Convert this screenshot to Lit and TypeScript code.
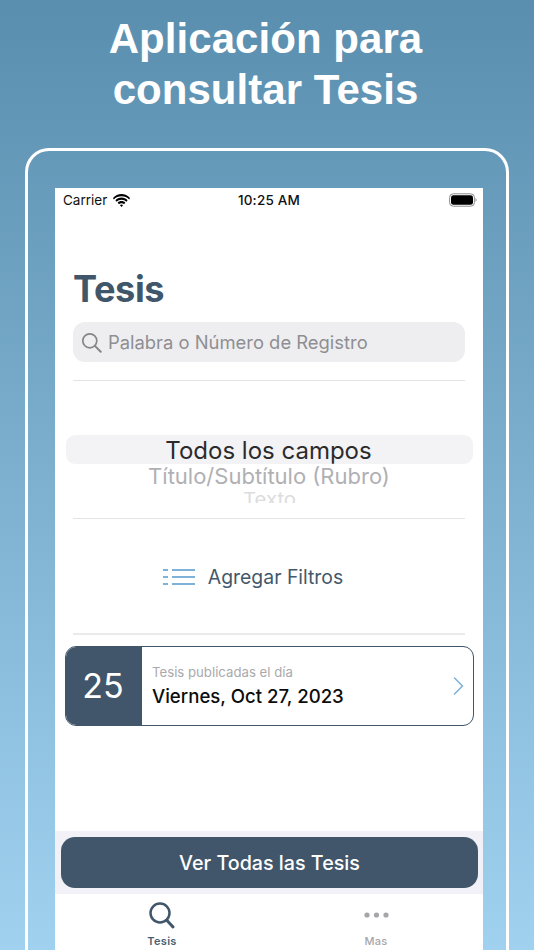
import { LitElement, html, css } from "lit";
import { customElement } from "lit/decorators.js";

@customElement("app-root")
export class AppRoot extends LitElement {
  static styles = css`
    :host {
      display: flex;
      flex-direction: column;
      width: 534px;
      height: 950px;
      overflow: hidden;
      background: linear-gradient(180deg, #5a8eae 0%, #a0d2f0 100%);
      font-family: Inter, "Liberation Sans", sans-serif;
    }
    h1 {
      margin: 0;
      padding: 13px 3px 0 0;
      height: 135px;
      box-sizing: border-box;
      text-align: center;
      font: bold 42px/51px "Liberation Sans", Arial, sans-serif;
      letter-spacing: 0.05px;
      color: #fff;
    }
    .frame {
      flex: 1;
      min-height: 0;
      margin: 13px 25px 0 25px;
      border: 3px solid #fff;
      border-bottom: 0;
      border-radius: 24px 24px 0 0;
      padding: 37px 23px 0 27px;
      display: flex;
    }
    .screen {
      flex: 1;
      background: #fff;
      display: flex;
      flex-direction: column;
      min-width: 0;
    }
    .status {
      height: 24px;
      display: grid;
      grid-template-columns: 1fr auto 1fr;
      align-items: center;
      padding: 0 6px 0 8px;
      font-size: 13.5px;
      color: #111;
    }
    .status .left { display: flex; align-items: center; gap: 6px; }
    .status .time { font-weight: 500; letter-spacing: 0.2px; padding-right: 2px; }
    .status .right { display: flex; justify-content: flex-end; }
    .content { padding: 0 18px; }
    .title {
      margin: 55px 0 0;
      font-size: 36.2px;
      line-height: 44px;
      font-weight: 700;
      letter-spacing: -0.4px;
      color: #3f566b;
    }
    .search {
      margin-top: 11px;
      height: 40px;
      border-radius: 12px;
      background: #eeeef0;
      display: flex;
      align-items: center;
      gap: 6px;
      padding-left: 8px;
      font-size: 18.4px;
      color: #8e8e93;
    }
    .rule { height: 1px; background: #e2e5e8; }
    .rule.r1 { margin-top: 18px; }
    .picker {
      margin: 54px -8px 0 -7px;
      height: 83px;
      text-align: center;
      overflow: hidden;
    }
    .picker .sel {
      height: 29px;
      border-radius: 9px;
      background: #f3f3f5;
      font-size: 24px;
      line-height: 31px;
      padding-right: 2px;
      color: #2b2b2e;
    }
    .picker .o1 {
      font-size: 22px;
      line-height: 25px;
      padding-right: 1px;
      color: #b0b0b3;
    }
    .picker .o2 {
      font-size: 18.5px;
      line-height: 21px;
      height: 14px;
      overflow: hidden;
      color: #dcdcde;
      transform: scaleX(1.1);
    }
    .filters {
      height: 114px;
      padding-top: 2px;
      display: flex;
      align-items: center;
      justify-content: center;
      gap: 13px;
      padding-right: 32px;
      font-size: 19.4px;
      color: #43586b;
      box-sizing: border-box;
    }
    .rule.r3 { height: 2px; background: #e9eaec; }
    .card {
      margin: 11px -9px 0 -8px;
      height: 80px;
      box-sizing: border-box;
      border: 1px solid #41566a;
      border-radius: 11px;
      overflow: hidden;
      display: flex;
      align-items: stretch;
    }
    .day {
      width: 76px;
      background: #41566a;
      color: #fff;
      font-size: 34px;
      padding: 0 2px 2px 0;
      box-sizing: border-box;
      display: flex;
      align-items: center;
      justify-content: center;
    }
    .info {
      flex: 1;
      display: flex;
      flex-direction: column;
      justify-content: center;
      padding: 2px 0 0 10px;
    }
    .info small { font-size: 13.2px; color: #a9a9ad; line-height: 17px; }
    .info strong { font-size: 18.6px; font-weight: 500; color: #0c0c0c; line-height: 30px; }
    .chev { align-self: center; margin-right: 9px; display: block; }
    .spacer { flex: 1; }
    .strip {
      background: #f2f1f7;
      padding: 6px 5px 6px 6px;
    }
    .btn {
      height: 51px;
      border-radius: 14px;
      background: #41566a;
      color: #fff;
      font-size: 19.7px;
      font-weight: 500;
      display: flex;
      align-items: center;
      justify-content: center;
    }
    .tabs {
      height: 56px;
      display: grid;
      grid-template-columns: 1fr 1fr;
      flex: none;
    }
    .tab {
      display: flex;
      flex-direction: column;
      align-items: center;
      font-size: 11px;
      font-weight: 500;
      color: #a6a6aa;
    }
    .tab.on { color: #4a5f72; font-weight: 600; }
    .tab .ic { height: 40px; display: flex; align-items: center; padding-top: 2px; box-sizing: border-box; }
    .tab span { line-height: 14px; letter-spacing: 0.3px; }
    svg { display: block; }
  `;

  render() {
    return html`
      <h1>Aplicación para<br />consultar Tesis</h1>
      <div class="frame">
        <div class="screen">
          <div class="status">
            <div class="left">
              Carrier
              <svg width="17" height="13" viewBox="0 0 17 13" fill="#000">
                <path d="M8.5 2.2c3 0 5.7 1.2 7.7 3.2L17 3.9C14.7 1.5 11.8 0 8.5 0S2.300 1.500 0 3.900l.8 1.500c2-2 4.700-3.200 7.700-3.200z" />
                <path d="M8.500 5.800c1.900 0 3.700.8 5 2l1.100-1.600C13 4.600 10.900 3.600 8.500 3.600S4 4.600 2.400 6.200l1.100 1.600c1.300-1.200 3.100-2 5-2z" />
                <path d="M8.500 9.200c1 0 1.900.4 2.600 1l1.200-1.600c-1-1-2.300-1.500-3.800-1.500s-2.800.5-3.800 1.500l1.200 1.600c.7-.6 1.600-1 2.600-1z" />
                <path d="M8.500 10.600c-.6 0-1.100.2-1.500.6l1.500 1.800 1.500-1.800c-.4-.4-.9-.6-1.500-.6z" />
              </svg>
            </div>
            <div class="time">10:25 AM</div>
            <div class="right">
              <svg width="28" height="14" viewBox="0 0 28 14">
                <rect x="0.6" y="0.8" width="24.800" height="12.400" rx="3.600" fill="none" stroke="#8d8d8d" stroke-width="1" />
                <rect x="2" y="2.200" width="22" height="9.600" rx="2.400" fill="#000" />
                <path d="M26.500 5v4c.7-.3 1.100-1 1.100-2s-.4-1.700-1.100-2z" fill="#9a9a9a" />
              </svg>
            </div>
          </div>
          <div class="content">
            <div class="title">Tesis</div>
            <div class="search">
              <svg width="21" height="21" viewBox="0 0 21 21" fill="none" stroke="#85858a" stroke-width="1.700" stroke-linecap="round">
                <circle cx="8.800" cy="8.800" r="7" />
                <path d="M13.900 13.900l5.800 5.800" stroke-width="2" />
              </svg>
              <span>Palabra o Número de Registro</span>
            </div>
            <div class="rule r1"></div>
            <div class="picker">
              <div class="sel">Todos los campos</div>
              <div class="o1">Título/Subtítulo (Rubro)</div>
              <div class="o2">Texto</div>
            </div>
            <div class="rule"></div>
            <div class="filters">
              <svg width="32" height="18" viewBox="0 0 32 18" fill="none" stroke="#7fb2d8" stroke-width="2">
                <path d="M0 2h5M0 9h5M0 16h5" />
                <path d="M9 2h23M9 9h23M9 16h23" />
              </svg>
              <span>Agregar Filtros</span>
            </div>
            <div class="rule r3"></div>
            <div class="card">
              <div class="day">25</div>
              <div class="info">
                <small>Tesis publicadas el día</small>
                <strong>Viernes, Oct 27, 2023</strong>
              </div>
              <svg class="chev" width="11" height="18" viewBox="0 0 11 18" fill="none" stroke="#7fb2d8" stroke-width="1.600" stroke-linecap="round" stroke-linejoin="round">
                <path d="M1.500 1l8 8-8 8" />
              </svg>
            </div>
          </div>
          <div class="spacer"></div>
          <div class="strip"><div class="btn">Ver Todas las Tesis</div></div>
          <div class="tabs">
            <div class="tab on">
              <div class="ic">
                <svg width="26" height="27" viewBox="0 0 26 27" fill="none" stroke="#41566a" stroke-linecap="round">
                  <circle cx="11" cy="11" r="9.500" stroke-width="2.500" />
                  <path d="M17.800 18.200l6.200 6.800" stroke-width="3" />
                </svg>
              </div>
              <span>Tesis</span>
            </div>
            <div class="tab">
              <div class="ic">
                <svg width="25" height="6" viewBox="0 0 25 6" fill="#a6a6aa">
                  <circle cx="3" cy="3" r="2.600" />
                  <circle cx="12.500" cy="3" r="2.600" />
                  <circle cx="22" cy="3" r="2.600" />
                </svg>
              </div>
              <span>Mas</span>
            </div>
          </div>
        </div>
      </div>
    `;
  }
}
